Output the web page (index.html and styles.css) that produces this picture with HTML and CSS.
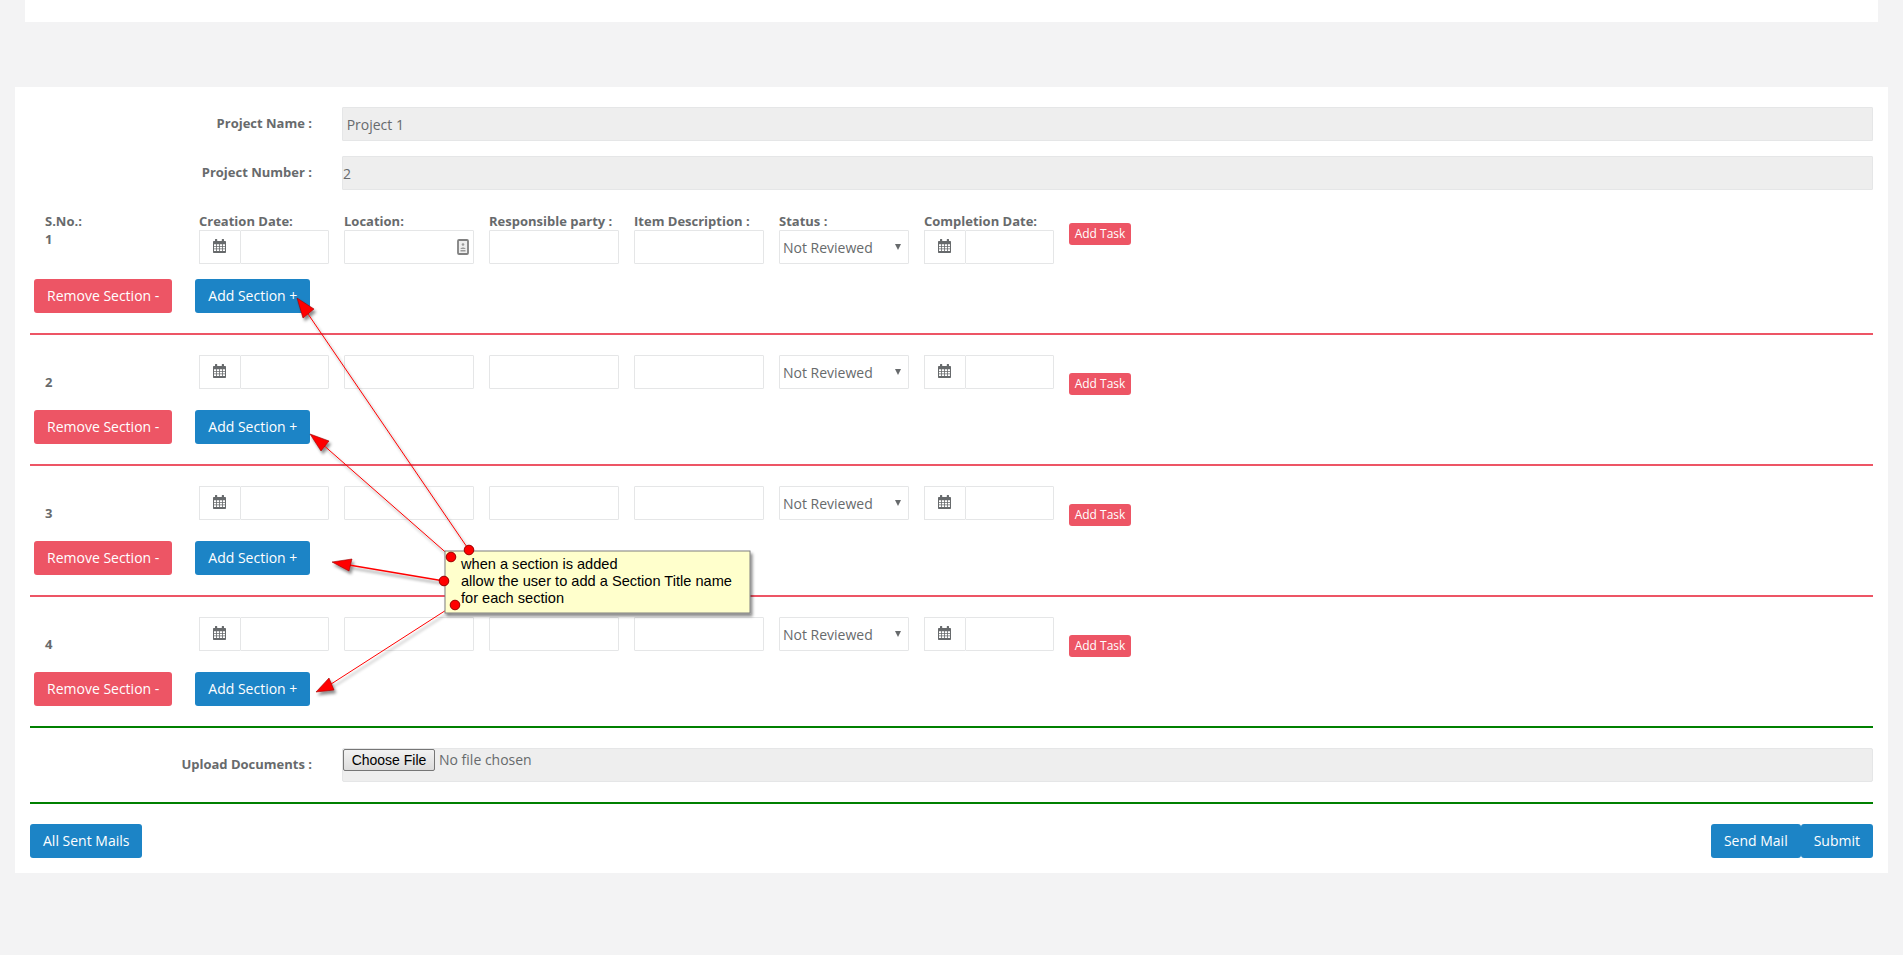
FILE: index.html
```html
<!DOCTYPE html>
<html lang="en">
<head>
<meta charset="utf-8">
<title>Project Sections</title>
<link rel="stylesheet" href="styles.css">
</head>
<body>
<svg width="0" height="0" class="defs">
  <symbol id="cal" viewBox="0 0 13 14">
    <path fill="#676a6c" fill-rule="evenodd" d="M2.500 0h1.200c.3 0 .5.2.5.5V2h4.600V.5c0-.3.2-.5.5-.5h1.200c.3 0 .5.2.5.5V2h1c.6 0 1 .4 1 1v10c0 .6-.4 1-1 1H1c-.6 0-1-.4-1-1V3c0-.6.4-1 1-1h1V.5c0-.3.2-.5.5-.5zM1 5.200v1.700h2.200V5.200zm3 0v1.700h2.100V5.200zm2.900 0v1.700H9V5.200zm2.900 0v1.700H12V5.200zM1 7.700v1.700h2.200V7.700zm3 0v1.700h2.100V7.700zm2.900 0v1.700H9V7.700zm2.900 0v1.700H12V7.700zM1 10.200V12h2.200v-1.800zm3 0V12h2.100v-1.800zm2.900 0V12H9v-1.800zm2.900 0V12H12v-1.800z"/>
  </symbol>
</svg>
<div class="top-card"></div>
<main class="card">
  <div class="form-row"><label class="form-label">Project Name :</label><input class="wide" disabled value=" Project 1"></div>
  <div class="form-row"><label class="form-label">Project Number :</label><input class="wide" disabled value="2"></div>

  <section class="section first">
    <div class="fields">
      <div class="sno"><b>S.No.:</b><b>1</b></div>
      <div class="field"><b>Creation Date:</b><div class="date"><span class="addon"><svg class="cal"><use href="#cal"/></svg></span><input></div></div>
      <div class="field"><b>Location:</b><div class="loc"><input><svg class="contact" viewBox="0 0 12 16"><rect x="1" y="1" width="10" height="14" rx="1" fill="#eee" stroke="#808080" stroke-width="1.800"/><circle cx="6" cy="5.500" r="1.300" fill="#9a9a9a"/><path d="M3.500 10c0-2 5-2 5 0zM3.500 11h5v1.500h-5z" fill="#9a9a9a"/></svg></div></div>
      <div class="field"><b>Responsible party :</b><input></div>
      <div class="field"><b>Item Description :</b><input></div>
      <div class="field"><b>Status :</b><div class="sel"><select><option>Not Reviewed</option></select></div></div>
      <div class="field"><b>Completion Date:</b><div class="date"><span class="addon"><svg class="cal"><use href="#cal"/></svg></span><input></div></div>
      <button class="task">Add Task</button>
    </div>
    <div class="actions"><button class="btn red">Remove Section -</button><button class="btn blue">Add Section +</button></div>
  </section>

  <section class="section">
    <div class="fields">
      <div class="sno"><b>2</b></div>
      <div class="field"><div class="date"><span class="addon"><svg class="cal"><use href="#cal"/></svg></span><input></div></div>
      <div class="field"><input></div>
      <div class="field"><input></div>
      <div class="field"><input></div>
      <div class="field"><div class="sel"><select><option>Not Reviewed</option></select></div></div>
      <div class="field"><div class="date"><span class="addon"><svg class="cal"><use href="#cal"/></svg></span><input></div></div>
      <button class="task">Add Task</button>
    </div>
    <div class="actions"><button class="btn red">Remove Section -</button><button class="btn blue">Add Section +</button></div>
  </section>

  <section class="section">
    <div class="fields">
      <div class="sno"><b>3</b></div>
      <div class="field"><div class="date"><span class="addon"><svg class="cal"><use href="#cal"/></svg></span><input></div></div>
      <div class="field"><input></div>
      <div class="field"><input></div>
      <div class="field"><input></div>
      <div class="field"><div class="sel"><select><option>Not Reviewed</option></select></div></div>
      <div class="field"><div class="date"><span class="addon"><svg class="cal"><use href="#cal"/></svg></span><input></div></div>
      <button class="task">Add Task</button>
    </div>
    <div class="actions"><button class="btn red">Remove Section -</button><button class="btn blue">Add Section +</button></div>
  </section>

  <section class="section last">
    <div class="fields">
      <div class="sno"><b>4</b></div>
      <div class="field"><div class="date"><span class="addon"><svg class="cal"><use href="#cal"/></svg></span><input></div></div>
      <div class="field"><input></div>
      <div class="field"><input></div>
      <div class="field"><input></div>
      <div class="field"><div class="sel"><select><option>Not Reviewed</option></select></div></div>
      <div class="field"><div class="date"><span class="addon"><svg class="cal"><use href="#cal"/></svg></span><input></div></div>
      <button class="task">Add Task</button>
    </div>
    <div class="actions"><button class="btn red">Remove Section -</button><button class="btn blue">Add Section +</button></div>
  </section>

  <div class="upload">
    <label class="form-label">Upload Documents :</label>
    <div class="upload-box"><input type="file" class="file"></div>
  </div>

  <footer class="foot">
    <button class="btn blue">All Sent Mails</button>
    <div class="foot-right"><button class="btn blue">Send Mail</button><button class="btn blue">Submit</button></div>
  </footer>
</main>

<svg class="overlay" viewBox="0 0 1903 955" width="1903" height="955">
  <defs>
    <filter id="sh" x="-30%" y="-30%" width="170%" height="170%"><feDropShadow dx="2" dy="3" stdDeviation="1.800" flood-color="#000" flood-opacity=".45"/></filter>
  </defs>
  <g filter="url(#sh)">
    <g stroke="#f00" fill="none">
      <path d="M469 550 306 311"/>
      <path d="M451 557 321 443"/>
      <path d="M444 581 349 565" stroke-width="1.400"/>
      <path d="M454 605 328 686"/>
    </g>
    <g fill="#f00" stroke="#900" stroke-width=".6">
      <path d="M297 298 314 309 303 318z"/>
      <path d="M310 434 329 441 321 451z"/>
      <path d="M332 562 352 559 349 571z"/>
      <path d="M316 692 329 678 334 690z"/>
    </g>
  </g>
  <rect class="note" x="445" y="551" width="305" height="62" filter="url(#sh)"/>
  <g fill="#f00" stroke="#900" stroke-width="1">
    <circle cx="469" cy="550" r="4.800"/>
    <circle cx="451" cy="557" r="4.800"/>
    <circle cx="444" cy="581" r="4.800"/>
    <circle cx="455" cy="605" r="4.800"/>
  </g>
</svg>
<div class="note-text">when a section is added<br>allow the user to add a Section Title name<br>for each section</div>
</body>
</html>
```
FILE: styles.css
```css
* { box-sizing: border-box; }
html, body { margin: 0; height: 955px; overflow: hidden; }
body {
  position: relative;
  background: #f3f3f4;
  font-family: "Open Sans", sans-serif;
  font-size: 13px;
  color: #676a6c;
}
.defs { position: absolute; }
.top-card { height: 22px; margin: 0 25px; background: #fff; }
.card {
  margin: 65px 15px 0;
  height: 786px;
  padding: 20px 15px;
  background: #fff;
}
input, select {
  font-family: "Open Sans", sans-serif;
  font-size: 14px;
  color: #676a6c;
  border: 1px solid #e5e6e7;
  border-radius: 1px;
  background: #fff;
  outline: 0;
}
.form-row { display: flex; align-items: flex-start; margin-bottom: 15px; }
.form-label {
  flex: none;
  width: 282px;
  margin-right: 30px;
  text-align: right;
  font-size: 13px;
  font-weight: 700;
  line-height: 18px;
  padding-top: 7px;
}
.wide { flex: 1; height: 34px; padding: 1px 0 0; background: #eee; min-width: 0; }
.section { border-bottom: 2px solid #ed5565; height: 131px; padding-top: 20px; }
.section.first { height: 130px; padding-top: 8px; }
.section.last { border-bottom-color: green; }
.fields { display: flex; align-items: flex-start; gap: 15px; height: 34px; }
.first .fields { height: 51px; }
.sno { width: 154px; padding: 19px 0 0 15px; font-size: 13px; line-height: 17px; display: flex; flex-direction: column; }
.first .sno { padding-top: 0; gap: 1px; }
.field { width: 130px; display: flex; flex-direction: column; }
.field b { font-size: 13px; line-height: 17px; height: 17px; white-space: nowrap; }
.field input, .date, .sel, .loc { width: 130px; height: 34px; }
.field input { display: block; }
.date { display: flex; }
.addon { flex: none; width: 41px; height: 34px; padding-right: 1px; border: 1px solid #e5e6e7; border-right: 0; display: flex; align-items: center; justify-content: center; }
.date input { width: 89px; }
.cal { width: 13px; height: 14px; display: block; margin-top: -2px; }
.loc { position: relative; }
.contact { position: absolute; right: 5px; top: 9px; width: 12px; height: 16px; }
.sel { position: relative; }
.sel select { width: 130px; height: 34px; appearance: none; padding: 1px 3px 0; }
.sel::after {
  content: "";
  position: absolute;
  right: 8px;
  top: 14px;
  border: 3px solid transparent;
  border-top: 6px solid #676a6c;
  border-bottom: 0;
}
.task {
  margin-top: 18px;
  height: 22px;
  width: 62px;
  padding: 0 0 1px;
  border: 0;
  border-radius: 3px;
  background: #ed5565;
  color: #fff;
  font: 12px "Open Sans", sans-serif;
}
.first .task { margin-top: 10px; }
.actions { display: flex; gap: 23px; margin: 21px 0 0 4px; }
.first .actions { margin-top: 15px; }
.btn {
  height: 34px;
  padding: 0 13px 2px;
  border: 0;
  border-radius: 3px;
  color: #fff;
  font: 14px "Open Sans", sans-serif;
  white-space: nowrap;
}
.red { background: #ed5565; }
.blue { background: #1c84c6; }
.upload { display: flex; align-items: flex-start; height: 76px; padding-top: 20px; border-bottom: 2px solid green; }
.upload .form-label { padding-top: 7px; }
.upload-box { flex: 1; height: 34px; padding: 0; background: #eee; border: 1px solid #e5e6e7; border-radius: 2px; }
.file { border: 0; background: none; padding: 0; font: 14px "Open Sans", sans-serif; height: 22px; display: block; }
.file::file-selector-button {
  width: 92px;
  height: 22px;
  margin: 0 4px 0 0;
  padding: 0;
  border: 1px solid #767676;
  border-radius: 2px;
  background: linear-gradient(#f2f2f2, #dcdcdc);
  color: #000;
  font: 14px "Liberation Sans", Arial, sans-serif;
}
.foot { display: flex; justify-content: space-between; margin-top: 20px; }
.foot-right { display: flex; }
.overlay { position: absolute; left: 0; top: 0; pointer-events: none; }
.note { fill: #ffffcc; stroke: #7f7f7f; stroke-width: 1; }
.note-text {
  position: absolute;
  left: 461px;
  top: 556px;
  font: 14.6px/17px "Liberation Sans", Arial, sans-serif;
  color: #000;
  white-space: nowrap;
}
```
